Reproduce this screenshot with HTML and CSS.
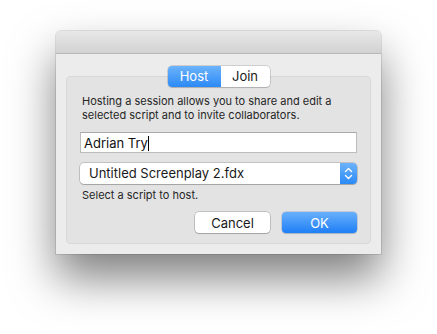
FILE: index.html
```html
<!DOCTYPE html>
<html lang="en">
<head>
    <meta charset="UTF-8">
    <meta name="viewport" content="width=device-width, initial-scale=1.0">
    <title>Host Session</title>
    <link rel="stylesheet" href="styles.css">
</head>
<body>
    <div class="window">
        <div class="titlebar"></div>
        <div class="content">
            <!-- Host / Join switch -->
            <div class="segmented">
                <div class="segment active">Host</div>
                <div class="segment">Join</div>
            </div>
            <div class="box">
                <p class="info">Hosting a session allows you to share and edit a selected script and to invite collaborators.</p>
                <div class="text-field">Adrian Try<span class="caret"></span></div>
                <div class="popup">
                    <span class="popup-label">Untitled Screenplay 2.fdx</span>
                    <span class="stepper">
                        <svg width="9" height="13" viewBox="0 0 9 13">
                            <path d="M1.5 4.5 L4.5 1.5 L7.5 4.5 M1.5 8.5 L4.5 11.5 L7.5 8.5" fill="none" stroke="#fff" stroke-width="1.4" stroke-linecap="round" stroke-linejoin="round"/>
                        </svg>
                    </span>
                </div>
                <p class="note">Select a script to host.</p>
                <div class="button-group">
                    <button class="cancel-btn">Cancel</button>
                    <button class="ok-btn">OK</button>
                </div>
            </div>
        </div>
    </div>
</body>
</html>
```

FILE: styles.css
```css
* {
    margin: 0;
    padding: 0;
    box-sizing: border-box;
    font-family: Inter, 'Liberation Sans', sans-serif;
}

html,
body {
    min-height: 100%;
    height: 100%;
}

body {
    background: #ffffff;
    padding: 31px 0 0 56px;
}

.window {
    width: 325px;
    height: 223px;
    background: #ececec;
    border-radius: 5px 5px 0 0;
    box-shadow: 0 24px 45px rgba(0, 0, 0, 0.5), 0 0 0 1px rgba(0, 0, 0, 0.1);
    overflow: hidden;
}

.titlebar {
    height: 23px;
    background: linear-gradient(#e9e8e9, #d3d2d3);
    border-bottom: 1px solid #b9b8b9;
}

.content {
    padding: 12px 10px 10px;
}

.segmented {
    position: relative;
    z-index: 1;
    display: flex;
    width: 102px;
    height: 21px;
    margin: 0 auto -11px;
    border-radius: 4px;
    box-shadow: 0 0 0 0.5px rgba(0, 0, 0, 0.25), 0 1px 1px rgba(0, 0, 0, 0.12);
    overflow: hidden;
    background: #ffffff;
}

.segment {
    font-size: 13px;
    line-height: 21px;
    text-align: center;
    color: #1a1a1a;
    width: 49px;
}

.segment.active {
    width: 53px;
    color: #ffffff;
    background: linear-gradient(#6cb3fa, #2b8af6);
}

.box {
    background: #e3e3e3;
    border: 1px solid #d8d8d8;
    border-radius: 4px;
    padding: 17px 13px 10px;
}

.info,
.note {
    font-size: 11px;
    line-height: 14px;
    color: #262626;
    padding-left: 2px;
}

.text-field {
    margin-top: 10px;
    height: 21px;
    background: #ffffff;
    border: 1px solid #bcbcbc;
    border-top-color: #a9a9a9;
    font-size: 13px;
    line-height: 20px;
    padding-left: 3px;
    color: #111;
}

.caret {
    display: inline-block;
    width: 1px;
    height: 15px;
    background: #000;
    vertical-align: -3px;
}

.popup {
    margin-top: 10px;
    height: 21px;
    display: flex;
    background: #ffffff;
    border-radius: 4px;
    box-shadow: 0 0 0 0.5px rgba(0, 0, 0, 0.3), 0 1px 1px rgba(0, 0, 0, 0.15);
    overflow: hidden;
}

.popup-label {
    flex: 1;
    font-size: 13px;
    line-height: 21px;
    padding-left: 9px;
    color: #1a1a1a;
}

.stepper {
    width: 17px;
    display: flex;
    align-items: center;
    justify-content: center;
    background: linear-gradient(#6cb3fa, #2b8af6);
}

.note {
    margin-top: 4px;
}

.button-group {
    display: flex;
    justify-content: flex-end;
    gap: 12px;
    margin-top: 10px;
}

button {
    width: 75px;
    height: 21px;
    border: none;
    border-radius: 4px;
    font-size: 13px;
    font-family: Inter, 'Liberation Sans', sans-serif;
}

.cancel-btn {
    background: #ffffff;
    color: #1a1a1a;
    box-shadow: 0 0 0 0.5px rgba(0, 0, 0, 0.3), 0 1px 1px rgba(0, 0, 0, 0.15);
}

.ok-btn {
    background: linear-gradient(#68b0fb, #1f7ff6);
    color: #ffffff;
    box-shadow: 0 0 0 0.5px rgba(0, 60, 160, 0.3), 0 1px 1px rgba(0, 0, 0, 0.12);
}
```
